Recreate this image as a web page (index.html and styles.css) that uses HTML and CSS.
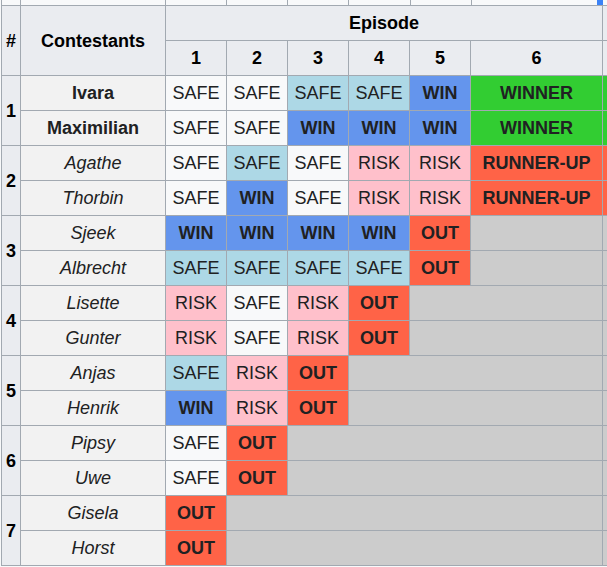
FILE: index.html
```html
<!DOCTYPE html>
<html>
<head>
<meta charset="utf-8">
<link rel="stylesheet" href="styles.css">
</head>
<body>
<div class="strip">
  <div class="sc w19"></div>
  <div class="sc w145"></div>
  <div class="sc w61"></div>
  <div class="sc w61"></div>
  <div class="sc w61"></div>
  <div class="sc w62"></div>
  <div class="sc w61"></div>
  <div class="sc w126"></div>
  <div class="sc blue"></div>
</div>
<table class="wikitable">
  <colgroup>
    <col class="c-num"><col class="c-name"><col class="c-ep"><col class="c-ep"><col class="c-ep"><col class="c-ep"><col class="c-ep"><col class="c-fin"><col class="c-extra">
  </colgroup>
  <thead>
    <tr><th rowspan="2">#</th><th rowspan="2">Contestants</th><th colspan="6">Episode</th><th></th></tr>
    <tr><th>1</th><th>2</th><th>3</th><th>4</th><th>5</th><th>6</th><th></th></tr>
  </thead>
  <tbody>
    <tr><th rowspan="2" class="num">1</th><td class="name b">Ivara</td><td class="safe">SAFE</td><td class="safe">SAFE</td><td class="lsafe">SAFE</td><td class="lsafe">SAFE</td><td class="win">WIN</td><td class="winner">WINNER</td><td class="winner"></td></tr>
    <tr><td class="name b">Maximilian</td><td class="safe">SAFE</td><td class="safe">SAFE</td><td class="win">WIN</td><td class="win">WIN</td><td class="win">WIN</td><td class="winner">WINNER</td><td class="winner"></td></tr>
    <tr><th rowspan="2" class="num">2</th><td class="name i">Agathe</td><td class="safe">SAFE</td><td class="lsafe">SAFE</td><td class="safe">SAFE</td><td class="risk">RISK</td><td class="risk">RISK</td><td class="out">RUNNER-UP</td><td class="out"></td></tr>
    <tr><td class="name i">Thorbin</td><td class="safe">SAFE</td><td class="win">WIN</td><td class="safe">SAFE</td><td class="risk">RISK</td><td class="risk">RISK</td><td class="out">RUNNER-UP</td><td class="out"></td></tr>
    <tr><th rowspan="2" class="num">3</th><td class="name i">Sjeek</td><td class="win">WIN</td><td class="win">WIN</td><td class="win">WIN</td><td class="win">WIN</td><td class="out">OUT</td><td class="gone"></td><td class="gone"></td></tr>
    <tr><td class="name i">Albrecht</td><td class="lsafe">SAFE</td><td class="lsafe">SAFE</td><td class="lsafe">SAFE</td><td class="lsafe">SAFE</td><td class="out">OUT</td><td class="gone"></td><td class="gone"></td></tr>
    <tr><th rowspan="2" class="num">4</th><td class="name i">Lisette</td><td class="risk">RISK</td><td class="safe">SAFE</td><td class="risk">RISK</td><td class="out">OUT</td><td class="gone" colspan="2"></td><td class="gone"></td></tr>
    <tr><td class="name i">Gunter</td><td class="risk">RISK</td><td class="safe">SAFE</td><td class="risk">RISK</td><td class="out">OUT</td><td class="gone" colspan="2"></td><td class="gone"></td></tr>
    <tr><th rowspan="2" class="num">5</th><td class="name i">Anjas</td><td class="lsafe">SAFE</td><td class="risk">RISK</td><td class="out">OUT</td><td class="gone" colspan="3"></td><td class="gone"></td></tr>
    <tr><td class="name i">Henrik</td><td class="win">WIN</td><td class="risk">RISK</td><td class="out">OUT</td><td class="gone" colspan="3"></td><td class="gone"></td></tr>
    <tr><th rowspan="2" class="num">6</th><td class="name i">Pipsy</td><td class="safe">SAFE</td><td class="out">OUT</td><td class="gone" colspan="4"></td><td class="gone"></td></tr>
    <tr><td class="name i">Uwe</td><td class="safe">SAFE</td><td class="out">OUT</td><td class="gone" colspan="4"></td><td class="gone"></td></tr>
    <tr><th rowspan="2" class="num">7</th><td class="name i">Gisela</td><td class="out">OUT</td><td class="gone" colspan="5"></td><td class="gone"></td></tr>
    <tr><td class="name i">Horst</td><td class="out">OUT</td><td class="gone" colspan="5"></td><td class="gone"></td></tr>
  </tbody>
</table>
</body>
</html>
```
FILE: styles.css
```css
html, body {
  margin: 0;
  padding: 0;
  background: #f8f9fa;
  overflow: hidden;
}
body {
  font-family: "Liberation Sans", Arial, sans-serif;
  color: #202122;
  width: 800px;
}
.strip {
  display: flex;
  height: 5px;
  padding-left: 1px;
}
.sc {
  flex: none;
  height: 5px;
  border-left: 1px solid #a2a9b1;
  box-sizing: border-box;
}
.w19 { width: 19px; }
.w145 { width: 145px; }
.w61 { width: 61px; }
.w62 { width: 62px; }
.w126 { width: 126px; }
.sc.blue {
  width: 6px;
  border-left: none;
  background: #3b82f6;
}
.wikitable {
  border-collapse: collapse;
  table-layout: fixed;
  width: 681px;
  margin-left: 1px;
  background: #f8f9fa;
  font-size: 18px;
}
.c-num { width: 19px; }
.c-name { width: 145px; }
.c-ep { width: 61px; }
.c-fin { width: 132px; }
.c-extra { width: 80px; }
.wikitable th,
.wikitable td {
  border: 1px solid #a2a9b1;
  padding: 4px 0;
  line-height: 26px;
  text-align: center;
  white-space: nowrap;
  overflow: hidden;
}
.wikitable th {
  background: #eaecf0;
  font-weight: bold;
  color: #000;
}
.wikitable td.name {
  background: #f2f2f2;
}
.name.b { font-weight: bold; }
.name.i { font-style: italic; }
.safe { background: #f8f9fa; }
.lsafe { background: #add8e6; }
.win { background: #6495ed; font-weight: bold; }
.winner { background: #32cd32; font-weight: bold; }
.risk { background: #ffc0cb; }
.out { background: #ff6347; font-weight: bold; }
.gone { background: #cccccc; }
```
